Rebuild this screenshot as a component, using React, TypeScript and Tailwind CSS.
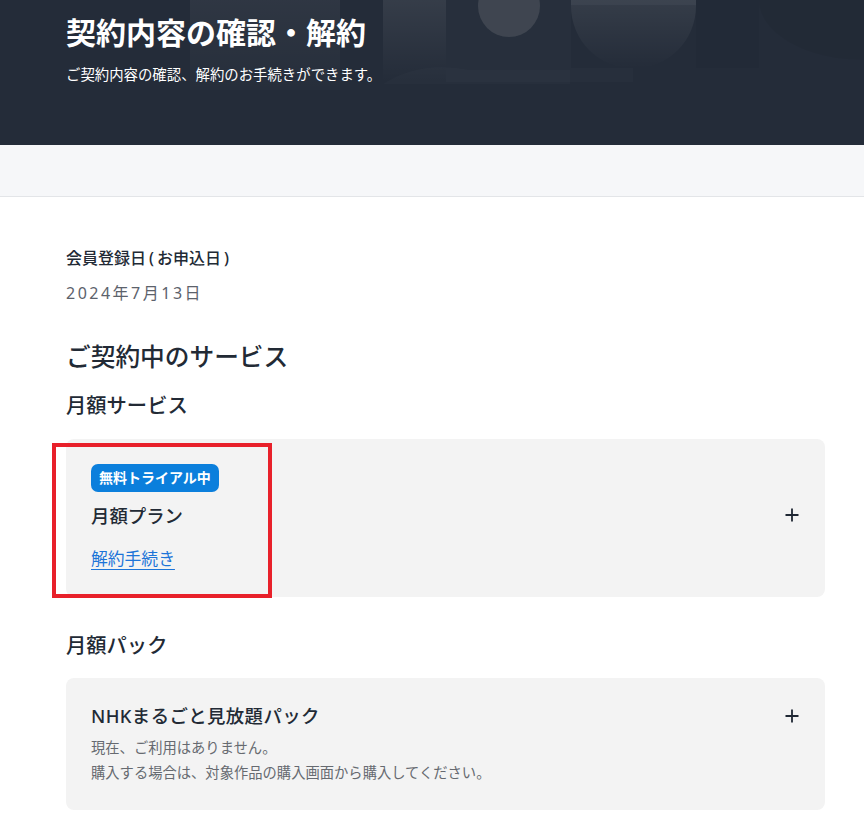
import React from "react";

function Plus() {
  return (
    <svg width="14" height="14" viewBox="0 0 14 14" className="block">
      <path d="M7 0.5V13.5M0.5 7H13.5" stroke="#1f2733" strokeWidth="1.8" fill="none" />
    </svg>
  );
}

export default function App() {
  return (
    <div
      className="relative w-full min-h-[817px] bg-white text-[#222a35]"
      style={{ fontFamily: '"Noto Sans", "Noto Sans CJK JP", sans-serif' }}
    >
      {/* Header */}
      <header className="relative h-[145px] overflow-hidden bg-[#242c39]">
        <svg
          className="absolute inset-0 h-full w-full"
          viewBox="0 0 864 145"
          preserveAspectRatio="none"
        >
          <defs>
            <linearGradient id="fade" x1="0" y1="0" x2="0" y2="1">
              <stop offset="0" stopColor="#ffffff" stopOpacity="0.08" />
              <stop offset="1" stopColor="#ffffff" stopOpacity="0" />
            </linearGradient>
            <linearGradient id="fade2" x1="0" y1="0" x2="0" y2="1">
              <stop offset="0" stopColor="#ffffff" stopOpacity="0.05" />
              <stop offset="1" stopColor="#ffffff" stopOpacity="0.01" />
            </linearGradient>
          </defs>
          <rect x="190" y="0" width="150" height="90" fill="url(#fade2)" />
          <rect x="383" y="0" width="63" height="82" fill="url(#fade)" />
          <path d="M383 84 Q420 60 470 70 L570 70 L570 84 Z" fill="#ffffff" fillOpacity="0.015" />
          <circle cx="509" cy="6" r="31" fill="#ffffff" fillOpacity="0.11" />
          <rect x="446" y="0" width="125" height="82" fill="#ffffff" fillOpacity="0.015" />
          <path d="M571 0 H696 V6 A62.5 62.5 0 0 1 571 6 Z" fill="url(#fade)" />
          <rect x="571" y="0" width="125" height="5" fill="#ffffff" fillOpacity="0.04" />
          <rect x="571" y="68" width="62" height="14" fill="#ffffff" fillOpacity="0.015" />
          <rect x="696" y="0" width="63" height="68" fill="#000000" fillOpacity="0.03" />
          <path d="M759 0 H864 V60 A105 60 0 0 1 759 0 Z" fill="#000000" fillOpacity="0.04" />
        </svg>
        <div className="relative pl-[66px] pt-[10px]">
          <h1 className="text-[30px] leading-[45px] font-bold text-white">
            契約内容の確認・解約
          </h1>
          <p className="mt-[9px] text-[14.4px] leading-[21px] text-white">
            ご契約内容の確認、解約のお手続きができます。
          </p>
        </div>
      </header>

      {/* Gray band */}
      <div className="h-[52px] border-b border-[#e3e5e8] bg-[#f6f7f9]" />

      {/* Content */}
      <main className="ml-[66px] w-[759px] pt-[49px] pb-[7px]">
        <p className="text-[16px] leading-[24px] font-medium text-[#222a35]">
          会員登録日<span className="mx-[3px]">(</span>お申込日<span className="mx-[3px]">)</span>
        </p>
        <p className="mt-[11px] text-[16px] leading-[24px] tracking-[2.5px] text-[#5c626b]">
          2024年7月13日
        </p>

        <h2 className="mt-[34px] text-[24.7px] leading-[36px] font-medium">
          ご契約中のサービス
        </h2>
        <h3 className="mt-[15px] text-[20.3px] leading-[30px] font-medium">
          月額サービス
        </h3>

        <div className="mt-[19px] flex items-center justify-between rounded-[8px] bg-[#f3f3f3] pl-[25px] pr-[26px] pt-[25px] pb-[26px]">
          <div>
            <span className="inline-block rounded-[7px] bg-[#0b7fdc] px-[8px] text-[14px] leading-[28px] font-bold text-white">
              無料トライアル中
            </span>
            <p className="mt-[10px] text-[18.4px] leading-[27px] font-medium">月額プラン</p>
            <a
              href="#"
              className="mt-[17px] block text-[16.8px] leading-[25px] text-[#1c74d8] underline underline-offset-[4px] decoration-[1px]"
            >
              解約手続き
            </a>
          </div>
          <div className="-mt-[6px]">
            <Plus />
          </div>
        </div>

        <h3 className="mt-[33px] text-[20.3px] leading-[30px] font-medium">月額パック</h3>

        <div className="mt-[18px] rounded-[8px] bg-[#f3f3f3] pl-[25px] pr-[26px] pt-[24px] pb-[25px]">
          <div className="flex items-center justify-between">
            <p className="text-[18.4px] leading-[27px] font-medium tracking-[0.4px]">
              NHKまるごと見放題パック
            </p>
            <Plus />
          </div>
          <p className="mt-[6px] text-[14.3px] leading-[25px] text-[#666a70]">
            現在、ご利用はありません。
            <br />
            購入する場合は、対象作品の購入画面から購入してください。
          </p>
        </div>
      </main>

      {/* Red annotation box */}
      <div className="pointer-events-none absolute left-[52px] top-[443px] h-[155px] w-[220px] border-[4px] border-[#e8202a]" />
    </div>
  );
}
